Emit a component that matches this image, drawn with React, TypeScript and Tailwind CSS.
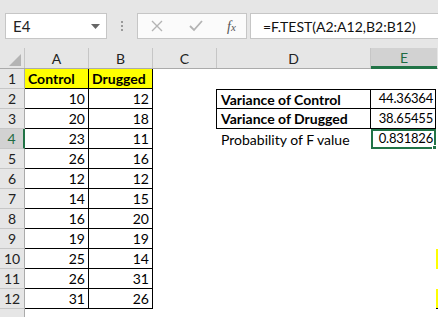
import React from "react";

const font = { fontFamily: "Lato, 'Open Sans', sans-serif" };

const data: [number, number][] = [
  [10, 12],
  [20, 18],
  [23, 11],
  [26, 16],
  [12, 12],
  [14, 15],
  [16, 20],
  [19, 19],
  [25, 14],
  [26, 31],
  [31, 26],
];

const App: React.FC = () => {
  const rows = [1, 2, 3, 4, 5, 6, 7, 8, 9, 10, 11, 12, 13];

  return (
    <div className="w-[438px] h-[317px] overflow-hidden bg-white text-[#000] relative" style={font}>
      {/* Formula bar */}
      <div className="h-[48px] bg-[#e6e6e6] flex items-start pt-[13px] pl-[5px]">
        <div className="w-[102px] h-[26px] bg-white border border-[#c6c6c6] flex items-center justify-between pl-[7px] pr-[6px]">
          <span className="text-[15px] text-[#222]">E4</span>
          <svg width="9" height="5" viewBox="0 0 9 5">
            <path d="M0 0h9L4.5 5z" fill="#666" />
          </svg>
        </div>
        <div className="w-[30px] h-[26px] flex flex-col items-center justify-center gap-[2px]">
          <div className="w-[2px] h-[2px] bg-[#9a9a9a]" />
          <div className="w-[2px] h-[2px] bg-[#9a9a9a]" />
          <div className="w-[2px] h-[2px] bg-[#9a9a9a]" />
        </div>
        <div className="w-[110px] h-[26px] bg-[#fbfbfb] border border-[#c6c6c6] flex items-center pl-[13px]">
          <svg width="12" height="12" viewBox="0 0 12 12">
            <path d="M1 1l10 10M11 1L1 11" stroke="#b4b4b4" strokeWidth="1.4" />
          </svg>
          <svg className="ml-[26px]" width="14" height="12" viewBox="0 0 14 12">
            <path d="M1 6l4 4 8-9" stroke="#b4b4b4" strokeWidth="1.8" fill="none" />
          </svg>
          <span
            className="ml-[24px] text-[14px] italic text-[#555]"
            style={{ fontFamily: "'Liberation Serif', serif" }}
          >
            f<span className="text-[11px]">x</span>
          </span>
        </div>
        <div className="ml-[3px] flex-1 h-[26px] bg-white border border-[#c6c6c6] border-r-0 flex items-center pl-[12px]">
          <span className="text-[14px] text-[#111]">=F.TEST(A2:A12,B2:B12)</span>
        </div>
      </div>

      {/* Column headers */}
      <div className="flex h-[21px] bg-[#e6e6e6] border-b border-[#ababab] text-[14px] text-[#222]">
        <div className="w-[25px] border-r border-[#c6c6c6] flex items-end justify-end pr-[3px] pb-[2px]">
          <svg width="12" height="12" viewBox="0 0 12 12">
            <path d="M12 0v12H0z" fill="#b4b4b4" />
          </svg>
        </div>
        <div className="w-[64px] border-r border-[#c6c6c6] flex items-center justify-center">A</div>
        <div className="w-[64px] border-r border-[#c6c6c6] flex items-center justify-center">B</div>
        <div className="w-[64px] border-r border-[#c6c6c6] flex items-center justify-center">C</div>
        <div className="w-[154px] border-r border-[#c6c6c6] flex items-center justify-center">D</div>
        <div className="w-[66px] bg-[#d2d2d2] border-b-[3px] border-[#217346] flex items-center justify-center text-[#1e6b43] -mb-[1px]">
          E
        </div>
      </div>

      {/* Rows */}
      {rows.map((r) => {
        const sel = r === 4;
        const d = r >= 2 && r <= 12 ? data[r - 2] : null;
        return (
          <div key={r} className="flex h-[20px] text-[14px]">
            <div
              className={
                sel
                  ? "w-[25px] bg-[#d2d2d2] border-b border-[#c6c6c6] border-r-2 border-r-[#217346] flex items-center justify-center text-[#1e6b43]"
                  : "w-[25px] bg-[#e6e6e6] border-b border-[#c6c6c6] border-r border-r-[#ababab] flex items-center justify-center text-[#222]"
              }
            >
              {r < 13 ? r : ""}
            </div>
            {r === 1 && (
              <>
                <div className="w-[64px] bg-[#ffff00] border-b border-r border-black flex items-center pl-[3px] font-bold">
                  Control
                </div>
                <div className="w-[64px] bg-[#ffff00] border-b border-r border-black flex items-center pl-[3px] font-bold">
                  Drugged
                </div>
              </>
            )}
            {d && (
              <>
                <div className="w-[64px] border-b border-r border-black flex items-center justify-end pr-[3px]">
                  {d[0]}
                </div>
                <div className="w-[64px] border-b border-r border-black flex items-center justify-end pr-[3px]">
                  {d[1]}
                </div>
              </>
            )}
            {r === 13 && <div className="w-[128px]" />}
            <div className="w-[63px]" />
            {(r === 2 || r === 3) && (
              <>
                <div
                  className={
                    "w-[155px] border-l border-r border-b border-black flex items-center pl-[4px] font-bold " +
                    (r === 2 ? "border-t" : "")
                  }
                >
                  {r === 2 ? "Variance of Control" : "Variance of Drugged"}
                </div>
                <div
                  className={
                    "w-[65px] border-r border-b border-black flex items-center justify-end pr-[2px] text-[13px] tracking-[-0.2px] " +
                    (r === 2 ? "border-t" : "")
                  }
                >
                  {r === 2 ? "44.36364" : "38.65455"}
                </div>
              </>
            )}
            {r === 4 && (
              <>
                <div className="w-[155px] flex items-center pl-[5px]">Probability of F value</div>
                <div className="w-[65px] relative border-2 border-[#217346] flex items-center justify-end pr-[1px] text-[13px] tracking-[-0.2px]">
                  0.831826
                  <div className="absolute -right-[3px] -bottom-[3px] w-[5px] h-[5px] bg-[#217346] border border-white" />
                </div>
              </>
            )}
            {r !== 2 && r !== 3 && r !== 4 && <div className="w-[220px]" />}
            <div
              className={
                "flex-1 " +
                (r === 10 || r === 12 ? "bg-[#ffff00]" : "") +
                (r === 12 ? " border-b border-black" : "")
              }
            />
          </div>
        );
      })}
    </div>
  );
};

export default App;
